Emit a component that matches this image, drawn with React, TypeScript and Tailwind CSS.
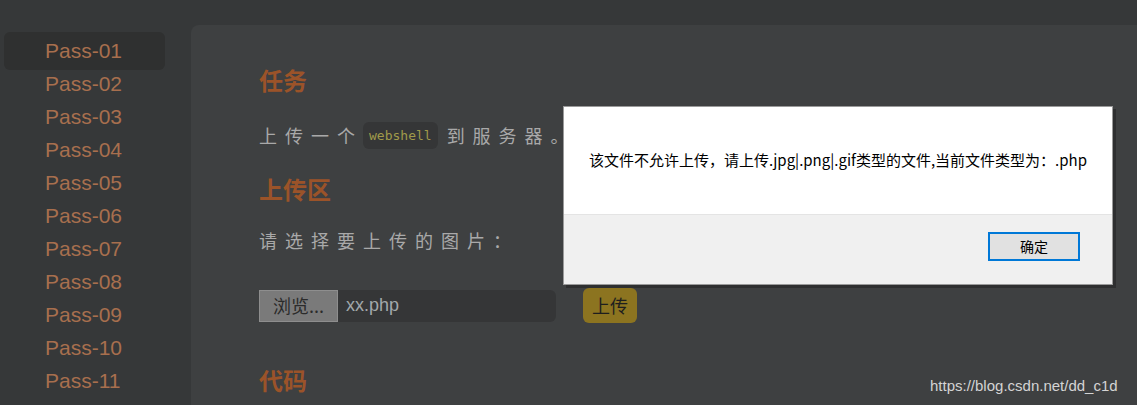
import React from "react";

const passes = ["01", "02", "03", "04", "05", "06", "07", "08", "09", "10", "11", "12"];

const cjk = { fontFamily: '"Noto Sans CJK SC", "Liberation Sans", sans-serif' };
const latin = { fontFamily: '"Liberation Sans", "Noto Sans CJK SC", sans-serif' };

export default function App() {
  return (
    <div className="relative flex h-[405px] w-[1137px] overflow-hidden bg-[#363839]" style={latin}>
      {/* Sidebar */}
      <div className="flex w-[191px] shrink-0 flex-col pt-[32px]">
        {passes.map((p, i) => (
          <div
            key={p}
            className={
              i === 0
                ? "mx-[4px] mb-[-3px] flex h-[38px] w-[161px] shrink-0 items-center rounded-md bg-[#2f3030] pl-[41px] text-[21px] text-[#a86f4e]"
                : "flex h-[33px] shrink-0 items-center pl-[45px] text-[21px] text-[#a86f4e]"
            }
          >
            Pass-{p}
          </div>
        ))}
      </div>

      {/* Main panel */}
      <div className="mt-[25px] flex-1 rounded-tl-lg bg-[#3e4041] pl-[68px] pt-[40px]" style={cjk}>
        <h2 className="text-[24px] font-bold leading-[30px] text-[#9b5329]">任务</h2>
        <p className="mt-[26px] flex items-center text-[18px] leading-[28px] tracking-[8px] text-[#a9a9a9]">
          上传一个
          <code
            className="mr-[9px] rounded-md bg-[#353637] px-[6px] py-[5px] text-[13px] leading-[17px] tracking-normal text-[#a09a4a]"
            style={{ fontFamily: '"DejaVu Sans Mono", monospace' }}
          >
            webshell
          </code>
          到服务器。
        </p>
        <h2 className="mt-[25px] text-[24px] font-bold leading-[30px] text-[#9b5329]">上传区</h2>
        <p className="mt-[22px] text-[18px] leading-[28px] tracking-[8px] text-[#a9a9a9]">请选择要上传的图片：</p>
        <div className="mt-[34px] flex items-center">
          <div className="flex h-[32px] w-[297px] items-center rounded-md bg-[#353637]">
            <span className="flex h-[32px] w-[79px] items-center justify-center border border-[#8e8e8e] bg-[#7a7a7a] text-[18px] text-[#2b2b2b]">
              浏览...
            </span>
            <span className="ml-[8px] text-[18px] text-[#a2a8ab]" style={latin}>
              xx.php
            </span>
          </div>
          <button className="ml-[27px] flex h-[35px] w-[54px] items-center justify-center rounded-md bg-[#8c7420] text-[18px] text-[#1e1e1e]">
            上传
          </button>
        </div>
        <h2 className="mt-[42px] text-[24px] font-bold leading-[30px] text-[#9b5329]">代码</h2>
      </div>

      {/* Alert dialog */}
      <div className="absolute left-[563px] top-[106px] flex h-[179px] w-[550px] flex-col border border-[#9a9a9a] bg-white shadow-[3px_3px_0_#2e2f30]" style={cjk}>
        <div className="flex h-[108px] items-center justify-center border-b border-[#e4e4e4] text-[15px] text-black">
          该文件不允许上传，请上传.jpg|.png|.gif类型的文件,当前文件类型为：.php
        </div>
        <div className="flex flex-1 items-start justify-end bg-[#f0f0f0] pr-[32px] pt-[17px]">
          <button className="flex h-[29px] w-[92px] items-center justify-center border-2 border-[#0078d7] bg-[#e1e1e1] text-[14px] text-black">
            确定
          </button>
        </div>
      </div>

      {/* Watermark */}
      <div className="absolute left-[930px] top-[375px] text-[15px] text-[#d4d4d4]">https://blog.csdn.net/dd_c1d</div>
    </div>
  );
}
